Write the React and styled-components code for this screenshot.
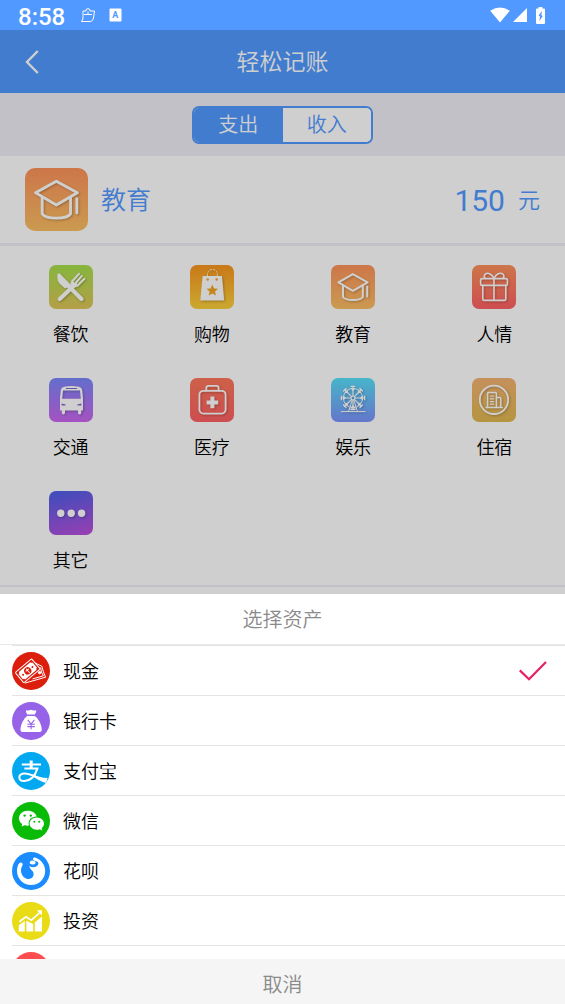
import { useState } from "react";
import styled, { createGlobalStyle } from "styled-components";

const GlobalStyle = createGlobalStyle`
  * {
    box-sizing: border-box;
  }
  body {
    margin: 0;
    background-color: #fff;
    font-family: Roboto, "Noto Sans CJK SC", sans-serif;
    font-weight: 350;
    overflow: hidden;
  }
  button, input {
    font-family: inherit;
    font-weight: inherit;
    border: 0;
    padding: 0;
    margin: 0;
    background: none;
    cursor: pointer;
  }
  svg {
    display: block;
  }
`;

const Container = styled.div`
  min-height: 100vh;
  background-color: #fff;
`;
const StatusBar = styled.div`
  display: flex;
  align-items: center;
  height: 30px;
  padding: 0 15px 0 18px;
  background-color: #5199ff;
  color: #fff;
`;
const Clock = styled.span`
  font-size: 24px;
  font-weight: 500;
  line-height: 30px;
  padding-top: 4px;
  margin-right: 15px;
`;
const StatusIcons = styled.div`
  display: flex;
  align-items: center;
  gap: ${(props) => props.$gap}px;
  margin-left: ${(props) => (props.$right ? "auto" : "0")};
`;

const Header = styled.header`
  display: grid;
  grid-template-columns: 63px 1fr 63px;
  align-items: center;
  height: 63px;
  background-color: #5199ff;
  color: #fff;
`;
const BackButton = styled.button`
  display: flex;
  justify-content: center;
  color: inherit;
`;
const Title = styled.h1`
  margin: 0;
  padding-top: 2px;
  font-size: 23px;
  font-weight: inherit;
  line-height: 32px;
  text-align: center;
`;

const TabBar = styled.div`
  display: flex;
  justify-content: center;
  align-items: center;
  height: 63px;
  background-color: #efeef5;
`;
const Tabs = styled.div`
  display: flex;
  width: 181px;
  height: 38px;
  border: 2px solid #5199ff;
  border-radius: 7px;
  overflow: hidden;
  background-color: #fff;
`;
const Tab = styled.button`
  flex: 1;
  font-size: 20px;
  line-height: 34px;
  color: ${(props) => (props.$active ? "#fff" : "#5199ff")};
  background-color: ${(props) => (props.$active ? "#5199ff" : "#fff")};
`;

const Summary = styled.div`
  display: flex;
  align-items: center;
  height: 90px;
  padding: 0 25px;
  border-bottom: 3px solid #efeef5;
  color: #5199ff;
`;
const SummaryName = styled.span`
  margin-left: 13px;
  padding-top: 2px;
  font-size: 25px;
  line-height: 36px;
`;
const Amount = styled.label`
  display: flex;
  align-items: center;
  gap: 13px;
  margin-left: auto;
  padding-top: 2px;
  font-size: 22px;
  line-height: 36px;
`;
const AmountInput = styled.input`
  width: 120px;
  font-size: 30px;
  font-weight: 400;
  line-height: 36px;
  text-align: right;
  color: inherit;
`;

const Grid = styled.div`
  display: grid;
  grid-template-columns: repeat(4, 1fr);
  row-gap: 19px;
  padding-top: 19px;
  border-bottom: 2px solid #efeef5;
`;
const Category = styled.button`
  display: flex;
  flex-direction: column;
  align-items: center;
  height: 94px;
  gap: 12px;
  font-size: 18px;
  line-height: 28px;
  color: #000;
`;
const Tile = styled.span`
  display: block;
  width: ${(props) => props.$size}px;
  height: ${(props) => props.$size}px;
  border-radius: ${(props) => (props.$size > 50 ? 10 : 7)}px;
  background: linear-gradient(${(props) => props.$bg});
  color: #fff;

  svg {
    width: 100%;
    height: 100%;
    filter: drop-shadow(1px 1px 1px rgba(0, 0, 0, 0.25));
  }
`;

const Overlay = styled.div`
  position: fixed;
  inset: 30px 0 0 0;
  display: flex;
  flex-direction: column;
  justify-content: flex-end;
  background-color: rgba(0, 0, 0, 0.19);
`;
const Sheet = styled.section`
  background-color: #fff;
`;
const SheetTitle = styled.h2`
  margin: 0;
  padding-top: 2px;
  border-bottom: 1px solid #e8e8e8;
  font-size: 20px;
  font-weight: inherit;
  line-height: 48px;
  text-align: center;
  color: #8a8a8a;
`;
const AssetList = styled.div`
  height: 314px;
  padding-left: 12px;
  overflow: hidden;
`;
const Asset = styled.button`
  display: flex;
  align-items: center;
  width: 100%;
  height: 50px;
  padding-right: 18px;
  border-top: 1px solid #e4e4e4;
  font-size: 18px;
  line-height: 26px;
  color: #000;
`;
const AssetIcon = styled.span`
  flex: none;
  width: 38px;
  height: 38px;
  border-radius: 50%;
  background-color: ${(props) => props.$bg};
  color: #fff;
  overflow: hidden;
`;
const AssetName = styled.span`
  padding: 2px 0 0 13px;
`;
const Checked = styled.span`
  margin-left: auto;
  color: #e91e63;
`;
const Cancel = styled.button`
  display: block;
  width: 100%;
  height: 45px;
  padding-top: 7px;
  background-color: #f5f5f5;
  font-size: 20px;
  line-height: 38px;
  color: #8a8a8a;
`;

const Line = ({ children, width = 2, size = 44 }) => (
  <svg
    viewBox={`0 0 ${size} ${size}`}
    fill="none"
    stroke="currentColor"
    strokeWidth={width}
    strokeLinecap="round"
    strokeLinejoin="round"
  >
    {children}
  </svg>
);

const FoodIcon = () => (
  <Line width={4}>
    <path d="M8.6 9 C7.8 13 8.6 16.5 11 19 L16 23.5 L22.5 20.5 L11.5 9.2 C10.3 8 9 8 8.6 9Z" fill="currentColor" stroke="none" />
    <path d="M19.5 21 L32.5 34" />
    <path d="M10.8 34 L26 19.5" />
    <path d="M23.5 16 L30 8.8 M26.6 18 L32.8 10.8 M28.6 20.5 L35.4 13.8" strokeWidth="2" />
    <path d="M22.8 15.5 L29.2 21 C26.5 23 24.5 22.5 22.5 21 C21 19 21.3 17 22.8 15.5Z" fill="currentColor" stroke="none" />
  </Line>
);

const ShopIcon = () => (
  <Line width={1}>
    <path d="M12.6 11 H32 L34.2 35.4 H10.3Z" fill="currentColor" stroke="none" />
    <path d="M17.5 10.5 V9 C18 3 27 3 27.3 9 V10.5" strokeWidth=".9" strokeDasharray="1.4 1.8" />
    <circle cx="17.7" cy="14.5" r="1.2" fill="#f0a423" stroke="none" />
    <circle cx="26.7" cy="14.5" r="1.2" fill="#f0a423" stroke="none" />
    <path d="M22.3 19.6 L24 23.4 L28.1 23.8 L25 26.5 L25.9 30.5 L22.3 28.4 L18.7 30.5 L19.6 26.5 L16.5 23.8 L20.6 23.4Z" fill="#f0a423" stroke="none" />
  </Line>
);

const CapIcon = () => (
  <Line width={2}>
    <path d="M21.9 9.2 L36.6 17.3 L21.9 25.8 L7.4 17.3Z" />
    <path d="M12 20.5 V32 C15 36 29 36 31.8 32 V20.5" />
    <path d="M36.2 21.5 V31.5" />
  </Line>
);

const GiftIcon = () => (
  <Line width={1.6}>
    <rect x="8.6" y="13.6" width="26.8" height="6.8" rx="1.5" />
    <path d="M10.8 20.4 V34 Q10.8 35.4 12.2 35.4 H32.4 Q33.8 35.4 33.8 34 V20.4 M22 13.6 V35.4" />
    <path d="M22 13.4 C20 9 15.5 7 13.2 9.2 C11.8 10.8 12.2 12.4 13.2 13.4 M22 13.4 C24 9 28.5 7 31 9.2 C32.4 10.8 32 12.4 31 13.4" />
  </Line>
);

const BusIcon = () => (
  <svg viewBox="0 0 44 44" fill="currentColor">
    <path
      fillRule="evenodd"
      d="M15 8.7 Q22.4 7.2 30 8.7 Q33 9.5 33.2 12 L34 20 V32.6 H32.2 V35 Q32.2 36.4 30.6 36.4 Q29 36.4 29 35 V32.6 H16 V35 Q16 36.4 14.4 36.4 Q12.8 36.4 12.8 35 V32.6 H11 V20 L11.8 12 Q12 9.5 15 8.7Z M17 10 V11 H28 V10Z M14 12.6 L13.2 20.8 H31.8 L31 12.6Z M12.6 25.6 V27.6 H16.6 V26.4Z M32.4 25.6 V27.6 H28.4 V26.4Z"
    />
  </svg>
);

const MedicalIcon = () => (
  <Line width={1.8}>
    <rect x="9.4" y="12.8" width="26.2" height="22.8" rx="4" />
    <path d="M16.3 12.6 V10 Q16.3 7.8 18.5 7.8 H26.5 Q28.6 7.8 28.6 10 V12.6" />
    <path d="M22.4 20.6 V28.2 M18.6 24.4 H26.2" strokeWidth="4" strokeLinecap="square" strokeLinejoin="miter" />
  </Line>
);

const spokes = [0, 45, 90, 135, 180, 225, 270, 315];

const WheelIcon = () => (
  <Line width={1}>
    <circle cx="22" cy="20" r="9.6" />
    <circle cx="22" cy="20" r="2" />
    {spokes.map((angle) => (
      <g key={angle} transform={`rotate(${angle} 22 20)`}>
        <path d="M22 18 V8.4" strokeWidth="1.2" />
        <path d="M20.2 8.4 H23.8 M20.6 10.4 L22 12.2 L23.4 10.4" strokeWidth="1.3" />
      </g>
    ))}
    <path d="M21 22.5 L17.6 33.4 M23 22.5 L26.4 33.4 M10.4 33.6 H34.2 M19.4 31 H24.6" />
  </Line>
);

const HotelIcon = () => (
  <Line width={1.5}>
    <circle cx="22" cy="21.8" r="14.2" strokeWidth="1.8" />
    <path d="M15.6 29.4 V15.4 Q15.6 14.4 16.6 14.4 H23.4 Q24.4 14.4 24.4 15.4 V29.4 M24.4 19.4 H27.6 Q28.8 19.4 28.8 20.6 V29.4 M14.2 29.5 H30.2" />
    <path d="M18.2 18 H21.6 M18.2 20.8 H21.6 M18.2 23.6 H21.6 M18.2 26.2 H21.6" strokeWidth="1.2" />
  </Line>
);

const MoreIcon = () => (
  <svg viewBox="0 0 44 44" fill="currentColor">
    <circle cx="11.8" cy="22.2" r="3.7" />
    <circle cx="22.2" cy="22.2" r="3.7" />
    <circle cx="32.6" cy="22.2" r="3.7" />
  </svg>
);

const CashIcon = () => (
  <Line width={1} size={38}>
    <path d="M22 10.5 L29.8 14.2 Q31 19.6 33.6 25.2 L13.2 31" />
    <path d="M24.6 16 L28.6 15.8 Q29 20.5 31.4 23.8 L21 26.8" />
    <circle cx="27.6" cy="20.6" r="1.2" fill="currentColor" />
    <g transform="rotate(-40 15.6 18.8)">
      <rect x="5" y="12.2" width="21.4" height="13.4" rx="1" fill="#dc1e0c" />
      <path d="M8.2 14 H23.2 Q23.2 15.4 24.8 15.6 V22.2 Q23.2 22.4 23.2 23.8 H8.2 Q8.2 22.4 6.6 22.2 V15.6 Q8.2 15.4 8.2 14Z" fill="currentColor" stroke="none" />
      <circle cx="15.7" cy="18.9" r="3.6" fill="#dc1e0c" stroke="none" />
      <path d="M14.2 18 H17.4 M15.8 16.6 V21.2" />
      <circle cx="9.6" cy="18.9" r="1" fill="#dc1e0c" stroke="none" />
      <circle cx="21.8" cy="18.9" r="1" fill="#dc1e0c" stroke="none" />
    </g>
  </Line>
);

const BagIcon = () => (
  <svg viewBox="0 0 38 38" fill="currentColor">
    <path d="M14 8.2 Q16 8.8 17.2 8.2 Q19 7.4 20.8 8.2 Q22 8.8 24.2 8.2 Q24.6 10 22.8 12.6 H15.2 Q13.4 10 14 8.2Z" />
    <path d="M15.2 14 H22.8 C26 16.4 29.6 22 29.8 27.8 Q29.8 30 27.6 30 H10.6 Q8.4 30 8.4 27.8 C8.6 22 12 16.4 15.2 14Z" />
    <path d="M15.8 17.8 L19.1 22 L22.4 17.8 M19.1 22 V27.2 M15.4 22.2 H22.8 M15.4 24.6 H22.8" fill="none" stroke="#9562e8" strokeWidth="1.1" />
  </svg>
);

const AlipayIcon = () => (
  <svg viewBox="0 0 38 38" fill="none" stroke="currentColor" strokeWidth="2">
    <path d="M9.8 12.4 H29" />
    <path d="M19.2 8.4 V16.4" strokeWidth="3" />
    <path d="M12.4 16.6 H25.4 C23.8 21.6 20 28.6 12.4 29 C6 29.2 5.6 22.6 11.6 21.6 C16 21 21 23.6 25 25.2" />
    <path d="M18.5 22 C25 24.4 30 25.8 35.6 26 L34.2 31 C29 29.6 23 26.6 18.5 22Z" fill="currentColor" stroke="none" />
  </svg>
);

const WechatIcon = () => (
  <svg viewBox="0 0 38 38" fill="currentColor">
    <path d="M15.8 8.8 C10.8 8.8 7 12 7 16.2 C7 18.6 8.2 20.6 10.2 22 L9.6 24.6 L12.6 23.2 C14 23.6 15.4 23.8 17 23.6 C15.4 18.4 19.6 14.4 24.8 14.6 C23.8 11 20.2 8.8 15.8 8.8Z" />
    <path d="M24.8 15.4 C20.8 15.4 17.6 18.2 17.6 21.6 C17.6 25 20.8 27.8 24.8 27.8 C25.8 27.8 26.8 27.6 27.8 27.2 L30.2 28.6 L29.6 26.2 C31.2 25 32 23.4 32 21.6 C32 18.2 28.8 15.4 24.8 15.4Z" />
    <g fill="#09bb07">
      <circle cx="12.6" cy="13.6" r="1.2" />
      <circle cx="18.8" cy="13.6" r="1.2" />
      <circle cx="22.4" cy="19.8" r="1" />
      <circle cx="27.2" cy="19.8" r="1" />
    </g>
  </svg>
);

const HuabeiIcon = () => (
  <svg viewBox="0 0 38 38" fill="currentColor">
    <path d="M7.4 11 C9 9.6 11.2 11 10.6 13 C10.2 14.4 9 15.4 9 18.4 C9 22.6 12 26.4 16 27 C19.6 27.4 21.8 25 21.6 21.6 C21.4 18.6 17.4 17.4 17.4 14 C20 16.2 26 15.4 26.4 11.4 C26.4 9 22.6 9.4 21.2 7.8 C20.4 6.4 21.6 5.2 23.2 5.6 C29 7.6 33.2 13 33.2 19 C33.2 26.8 27 33 19.2 33 C11.4 33 5 26.8 5 19 C5 15.8 5.8 12.6 7.4 11Z" />
    <path d="M18.4 9.2 C20 7.8 23.6 8.8 23.6 10.8 C23.6 12.6 19.6 13.2 18.2 11.8 C17.4 11 17.6 9.8 18.4 9.2Z" />
  </svg>
);

const InvestIcon = () => (
  <svg viewBox="0 0 38 38" fill="currentColor">
    <path d="M6.8 23.2 L12.8 19 V29.4 H6.8Z M14.4 18.8 L21.2 22 V29.4 H14.4Z M22.8 20.6 L30 14.4 V29.4 H22.8Z" />
    <path d="M7.4 19.8 L14 14.8 L19.4 18.2 L27.4 10.8" fill="none" stroke="currentColor" strokeWidth="1.8" />
    <path d="M24.8 8.2 H30 V13.4Z" />
  </svg>
);

const categories = [
  { name: "餐饮", icon: FoodIcon, bg: "#a5e04c, #dfc458" },
  { name: "购物", icon: ShopIcon, bg: "#f8951e, #fbd03c" },
  { name: "教育", icon: CapIcon, bg: "#fd925b, #fabe63" },
  { name: "人情", icon: GiftIcon, bg: "#fd915b, #fd6064" },
  { name: "交通", icon: BusIcon, bg: "#7a88fb, #cb66ee" },
  { name: "医疗", icon: MedicalIcon, bg: "#fd785b, #fd6064" },
  { name: "娱乐", icon: WheelIcon, bg: "#58dff8, #7c92fb" },
  { name: "住宿", icon: HotelIcon, bg: "#f3b272, #dfb850" },
  { name: "其它", icon: MoreIcon, bg: "165deg, #4a60e8, #bd4edc" },
];

const assets = [
  { name: "现金", icon: CashIcon, bg: "#dc1e0c" },
  { name: "银行卡", icon: BagIcon, bg: "#9562e8" },
  { name: "支付宝", icon: AlipayIcon, bg: "#02a9f1" },
  { name: "微信", icon: WechatIcon, bg: "#09bb07" },
  { name: "花呗", icon: HuabeiIcon, bg: "#1a8cff" },
  { name: "投资", icon: InvestIcon, bg: "#e9dc17" },
  { name: "", bg: "#ff4d4f" },
];

const App = () => {
  const [type, setType] = useState("支出");
  const [category, setCategory] = useState(categories[2]);
  const [amount, setAmount] = useState("150");
  const [asset, setAsset] = useState("现金");
  const [open, setOpen] = useState(true);

  return (
    <Container>
      <GlobalStyle />
      <StatusBar>
        <Clock>8:58</Clock>
        <StatusIcons $gap={13}>
          <svg width="16" height="16" viewBox="0 0 16 16" fill="none" stroke="currentColor" strokeWidth="1">
            <path d="M3 5.5 V4 H6 V2.6 Q8 .4 10 2.6 V4 H14.5 L13.5 11 Q13 14 10.5 14.5 H1.5 Q3.5 12 3 9.5Z M4 7.5 H12 M8 4.5 V7.5" />
          </svg>
          <svg width="13" height="14" viewBox="0 0 13 14">
            <rect width="12" height="13" x=".5" y=".5" rx="1" fill="#fff" />
            <text x="6.2" y="10" fontSize="9" fontWeight="700" textAnchor="middle" fill="#5199ff">A</text>
          </svg>
        </StatusIcons>
        <StatusIcons $gap={3} $right>
          <svg width="20" height="16" viewBox="0 0 20 16" fill="currentColor">
            <path d="M10 15.4 L.2 3.8 Q10 -3 19.8 3.8Z" />
          </svg>
          <svg width="14" height="14" viewBox="0 0 14 14" fill="currentColor">
            <path d="M0 14 L14 0 V14Z" />
          </svg>
          <svg width="20" height="17" viewBox="-6 0 20 17" fill="currentColor">
            <path fillRule="evenodd" d="M2.6 0 H6.4 V1.6 H8 Q9 1.6 9 2.6 V16 Q9 17 8 17 H1 Q0 17 0 16 V2.6 Q0 1.6 1 1.6 H2.6Z M6 4 L2.6 8.6 L4 9.4 L3.4 14 L6.8 9 L5.4 8.2Z" />
          </svg>
        </StatusIcons>
      </StatusBar>
      <Header>
        <BackButton aria-label="返回">
          <svg width="14" height="24" viewBox="0 0 14 24" fill="none" stroke="currentColor" strokeWidth="2.4">
            <path d="M12.8 1 L2 12 L12.8 23" />
          </svg>
        </BackButton>
        <Title>轻松记账</Title>
      </Header>
      <TabBar>
        <Tabs>
          {["支出", "收入"].map((name) => (
            <Tab key={name} $active={type === name} onClick={() => setType(name)}>
              {name}
            </Tab>
          ))}
        </Tabs>
      </TabBar>
      <Summary>
        <Tile $size={63} $bg={category.bg}>
          <category.icon />
        </Tile>
        <SummaryName>{category.name}</SummaryName>
        <Amount>
          <AmountInput value={amount} onChange={(e) => setAmount(e.target.value)} />
          元
        </Amount>
      </Summary>
      <Grid>
        {categories.map((item) => (
          <Category key={item.name} onClick={() => setCategory(item)}>
            <Tile $size={44} $bg={item.bg}>
              <item.icon />
            </Tile>
            {item.name}
          </Category>
        ))}
      </Grid>

      {open && (
        <Overlay>
          <Sheet>
            <SheetTitle>选择资产</SheetTitle>
            <AssetList>
              {assets.map((item) => (
                <Asset key={item.bg} onClick={() => setAsset(item.name)}>
                  <AssetIcon $bg={item.bg}>{item.icon && <item.icon />}</AssetIcon>
                  <AssetName>{item.name}</AssetName>
                  {asset === item.name && (
                    <Checked>
                      <svg width="28" height="20" viewBox="0 0 28 20" fill="none" stroke="currentColor" strokeWidth="2.2">
                        <path d="M.8 9.4 L10 18.2 L27 1" />
                      </svg>
                    </Checked>
                  )}
                </Asset>
              ))}
            </AssetList>
            <Cancel onClick={() => setOpen(false)}>取消</Cancel>
          </Sheet>
        </Overlay>
      )}
    </Container>
  );
};

export default App;
